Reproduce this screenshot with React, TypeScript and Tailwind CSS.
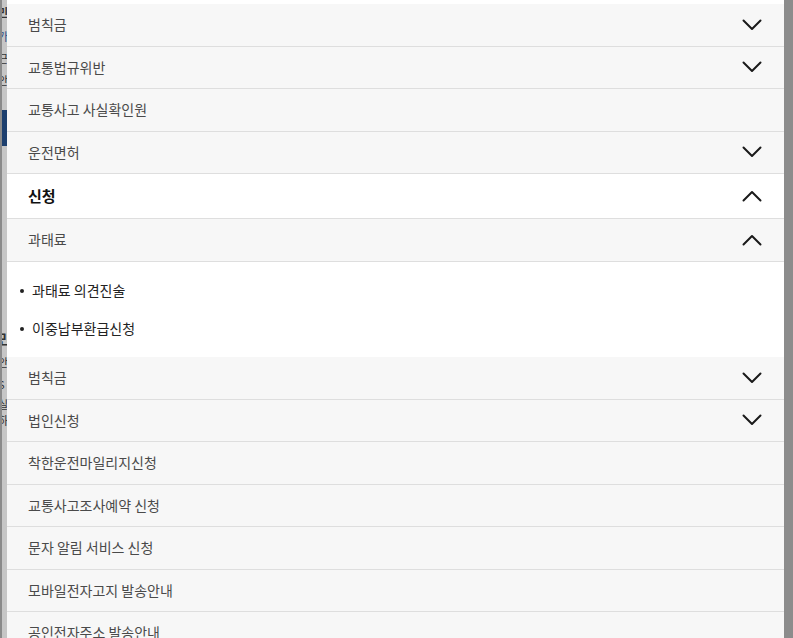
import React from "react";

const font = { fontFamily: '"Noto Sans CJK KR", "Noto Sans", sans-serif' };

function Chevron({ up = false }: { up?: boolean }) {
  return (
    <svg width="20" height="12" viewBox="0 0 20 12" fill="none" className="shrink-0">
      <polyline
        points={up ? "1.5,10.5 10,2 18.5,10.5" : "1.5,1.5 10,10 18.5,1.5"}
        stroke="#1a1a1a"
        strokeWidth="2"
        strokeLinecap="round"
        strokeLinejoin="round"
      />
    </svg>
  );
}

function Row({ label, chevron, up }: { label: string; chevron?: boolean; up?: boolean }) {
  return (
    <div className="h-[42.5px] shrink-0 flex items-center justify-between pl-[21px] pr-[22px] bg-[#f7f7f7] border-b border-[#dedede]">
      <span className="text-[14px] text-[#4a4a4a]">{label}</span>
      {chevron && <Chevron up={up} />}
    </div>
  );
}

export default function App() {
  const before = [
    { label: "범칙금", chevron: true },
    { label: "교통법규위반", chevron: true },
    { label: "교통사고 사실확인원" },
    { label: "운전면허", chevron: true },
  ];
  const after = [
    { label: "범칙금", chevron: true },
    { label: "법인신청", chevron: true },
    { label: "착한운전마일리지신청" },
    { label: "교통사고조사예약 신청" },
    { label: "문자 알림 서비스 신청" },
    { label: "모바일전자고지 발송안내" },
    { label: "공인전자주소 발송안내" },
  ];

  return (
    <div className="w-[793px] h-[638px] flex overflow-hidden bg-[#8c8c8c]" style={font}>
      {/* dimmed page behind */}
      <div className="w-[7px] shrink-0 flex">
        <div className="w-[2px] bg-[#8a8a8a]" />
        <div className="w-[5px] bg-[#c6c6c6] flex flex-col overflow-hidden text-[11px] leading-[12px] text-[#333]">
          <div className="h-[30px] pt-[6px] -ml-[4px] font-bold">민</div>
          <div className="h-[22px] -ml-[4px] text-[#2a4d86]">가</div>
          <div className="h-[22px] -ml-[4px]">근</div>
          <div className="h-[36px] -ml-[4px]">안</div>
          <div className="h-[36px] bg-[#1d3f6e]" />
          <div className="h-[184px]" />
          <div className="h-[26px] -ml-[4px] font-bold text-[14px] leading-[16px]">민</div>
          <div className="h-[22px] -ml-[4px]">안</div>
          <div className="h-[20px] -ml-[4px]">S</div>
          <div className="h-[16px] -ml-[4px]">실</div>
          <div className="h-[16px] -ml-[4px]">하</div>
        </div>
      </div>

      {/* menu panel */}
      <div className="w-[777px] shrink-0 bg-white flex flex-col overflow-hidden">
        <div className="h-[4px] shrink-0 bg-white" />
        {before.map((r) => (
          <Row key={r.label} label={r.label} chevron={r.chevron} />
        ))}
        <div className="h-[45px] shrink-0 flex items-center justify-between pl-[21px] pr-[22px] bg-white border-b border-[#dedede]">
          <span className="text-[15px] font-bold text-[#111]">신청</span>
          <Chevron up />
        </div>
        <Row label="과태료" chevron up />
        <div className="h-[95.5px] shrink-0 bg-white flex flex-col pt-[19px] gap-[18px] pl-[13px]">
          {["과태료 의견진술", "이중납부환급신청"].map((s) => (
            <div key={s} className="flex items-center gap-[8px] h-[20px] text-[14px] text-[#222]">
              <span className="w-[4px] h-[4px] rounded-full bg-[#222]" />
              <span>{s}</span>
            </div>
          ))}
        </div>
        {after.map((r) => (
          <Row key={r.label} label={r.label} chevron={r.chevron} />
        ))}
      </div>

      {/* dim on the right */}
      <div className="w-[9px] shrink-0 bg-[#8c8c8c]" />
    </div>
  );
}
